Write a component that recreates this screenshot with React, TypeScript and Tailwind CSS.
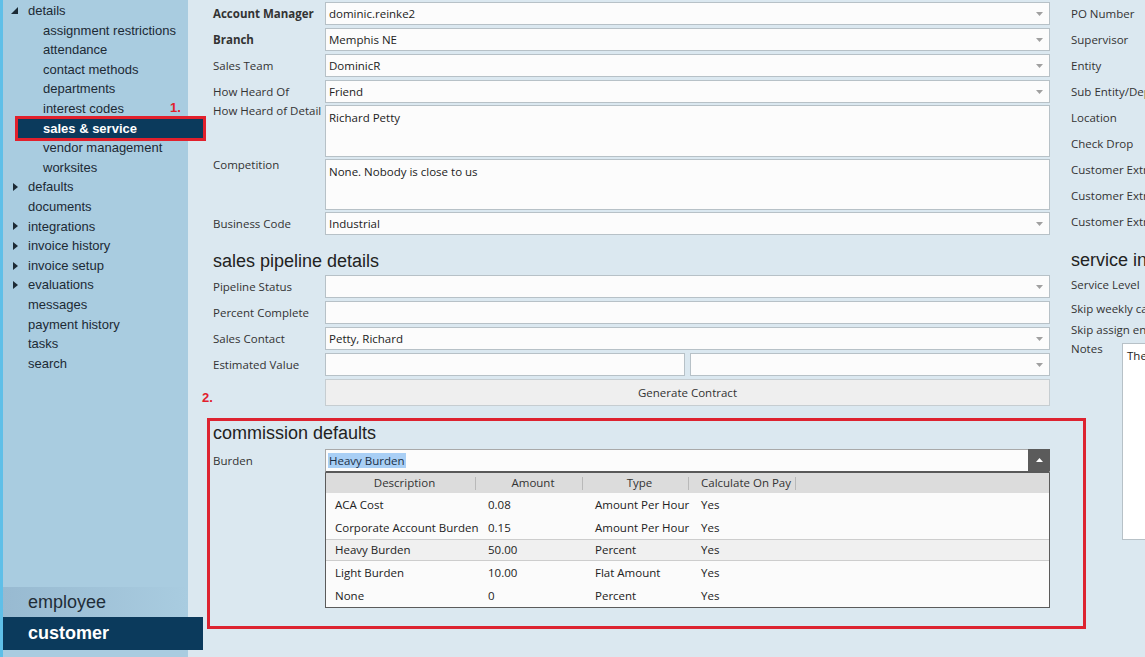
import type { ReactNode } from 'react'

type NavItem = {
  label: string
  depth: 0 | 1
  caret?: 'open' | 'closed'
  active?: boolean
  note?: string
}

const NAV: NavItem[] = [
  { label: 'details', depth: 0, caret: 'open' },
  { label: 'assignment restrictions', depth: 1 },
  { label: 'attendance', depth: 1 },
  { label: 'contact methods', depth: 1 },
  { label: 'departments', depth: 1 },
  { label: 'interest codes', depth: 1, note: '1.' },
  { label: 'sales & service', depth: 1, active: true },
  { label: 'vendor management', depth: 1 },
  { label: 'worksites', depth: 1 },
  { label: 'defaults', depth: 0, caret: 'closed' },
  { label: 'documents', depth: 0 },
  { label: 'integrations', depth: 0, caret: 'closed' },
  { label: 'invoice history', depth: 0, caret: 'closed' },
  { label: 'invoice setup', depth: 0, caret: 'closed' },
  { label: 'evaluations', depth: 0, caret: 'closed' },
  { label: 'messages', depth: 0 },
  { label: 'payment history', depth: 0 },
  { label: 'tasks', depth: 0 },
  { label: 'search', depth: 0 },
]

const BURDENS = [
  { desc: 'ACA Cost', amount: '0.08', type: 'Amount Per Hour', calc: 'Yes' },
  { desc: 'Corporate Account Burden', amount: '0.15', type: 'Amount Per Hour', calc: 'Yes' },
  { desc: 'Heavy Burden', amount: '50.00', type: 'Percent', calc: 'Yes', selected: true },
  { desc: 'Light Burden', amount: '10.00', type: 'Flat Amount', calc: 'Yes' },
  { desc: 'None', amount: '0', type: 'Percent', calc: 'Yes' },
]

const RIGHT_LABELS = [
  'PO Number',
  'Supervisor',
  'Entity',
  'Sub Entity/Department',
  'Location',
  'Check Drop',
  'Customer Extra 1',
  'Customer Extra 2',
  'Customer Extra 3',
]

export default function App() {
  return (
    <div className="flex h-[657px] w-[1145px] overflow-hidden bg-[#dbe8f0] font-['Open_Sans',sans-serif] text-[11.5px] text-[#333]">
      <Sidebar />
      <main className="flex flex-1 gap-[21px] pl-[25px] pt-[2px]">
        <div className="w-[837px] flex-none">
          <Field label="Account Manager" bold value="dominic.reinke2" select />
          <Field label="Branch" bold value="Memphis NE" select />
          <Field label="Sales Team" value="DominicR" select />
          <Field label="How Heard Of" value="Friend" select className="mb-[2px]" />
          <AreaField label="How Heard of Detail" value="Richard Petty" className="mb-[2px] h-[52px]" />
          <AreaField label="Competition" value="None. Nobody is close to us" className="mb-[2px] h-[51px]" />
          <Field label="Business Code" value="Industrial" select />

          <Heading className="pt-[12px] pb-[3px]">sales pipeline details</Heading>
          <Field label="Pipeline Status" select />
          <Field label="Percent Complete" />
          <Field label="Sales Contact" value="Petty, Richard" select />
          <div className="mb-[3px] flex h-[23px]">
            <Label>Estimated Value</Label>
            <div className="flex flex-1 gap-[5px]">
              <Box className="flex-1" />
              <Box className="flex-1" select />
            </div>
          </div>
          <div className="flex">
            <div className="relative w-[112px]">
              <span className="absolute -left-[11px] top-[9px] font-['Liberation_Sans',sans-serif] text-[13px] font-bold text-[#e2202c]">
                2.
              </span>
            </div>
            <button className="h-[27px] flex-1 border border-[#c6cdd1] bg-[#efefef] text-[#333]">
              Generate Contract
            </button>
          </div>

          <CommissionDefaults />
        </div>

        <RightColumn />
      </main>
    </div>
  )
}

function Sidebar() {
  return (
    <aside className="relative z-10 flex w-[188px] flex-none flex-col border-l-[3px] border-[#5fbfe8] bg-[#a9cce0] pt-[1px] font-['Liberation_Sans',Arial,sans-serif] text-[13px] text-[#1c2a35]">
      {NAV.map((item) => (
        <NavRow key={item.label} item={item} />
      ))}
      <div className="flex-1" />
      <div className="flex h-[30px] items-center bg-linear-to-r from-[#98bad1] to-[#a9cce0] pl-[25px] text-[18px] text-[#1f2d38]">
        employee
      </div>
      <div className="flex h-[33px] w-[200px] items-center bg-[#0b3a5c] pl-[25px] text-[18px] font-bold text-white">
        customer
      </div>
      <div className="h-[7px]" />
    </aside>
  )
}

function NavRow({ item }: { item: NavItem }) {
  if (item.active) {
    return (
      <div className="relative ml-[15px] h-[19.6px] w-[185px] bg-[#0b3a5c] pl-[25px] font-bold leading-[19.6px] text-white">
        {item.label}
        <span className="pointer-events-none absolute -inset-[3px] border-[3px] border-[#e2202c]" />
      </div>
    )
  }
  return (
    <div className="relative flex h-[19.6px] items-center leading-[19.6px]">
      <span className={`flex w-[25px] flex-none ${item.caret === 'open' ? 'pl-[8px]' : 'pl-[10px]'}`}>
        {item.caret === 'open' && (
          <svg width="7" height="7" viewBox="0 0 7 7" aria-hidden>
            <path d="M7 0 L7 7 L0 7 Z" fill="#1c2a35" />
          </svg>
        )}
        {item.caret === 'closed' && (
          <svg width="5" height="8" viewBox="0 0 5 8" aria-hidden>
            <path d="M0 0 L5 4 L0 8 Z" fill="#1c2a35" />
          </svg>
        )}
      </span>
      <span className={`whitespace-nowrap ${item.depth === 1 ? 'pl-[15px]' : ''}`}>{item.label}</span>
      {item.note && (
        <span className="absolute left-[167px] top-[-1px] font-bold text-[#e2202c]">{item.note}</span>
      )}
    </div>
  )
}

function Label({ children, bold, area }: { children: ReactNode; bold?: boolean; area?: boolean }) {
  return (
    <div
      className={`w-[112px] flex-none whitespace-nowrap ${
        area ? 'leading-[12px]' : 'pt-[3px] leading-[17px]'
      } ${bold ? 'font-bold' : ''}`}
    >
      {children}
    </div>
  )
}

function Arrow() {
  return (
    <svg width="7" height="4" viewBox="0 0 7 4" className="flex-none" aria-hidden>
      <path d="M0 0 L7 0 L3.5 4 Z" fill="#a0a0a0" />
    </svg>
  )
}

function Box({ value, select, className = '' }: { value?: string; select?: boolean; className?: string }) {
  return (
    <div
      className={`flex h-[23px] items-center border border-[#b7c1c7] bg-[#fcfcfc] pl-[3px] pr-[6px] text-[#222] ${className}`}
    >
      <span className="flex-1 truncate">{value}</span>
      {select && <Arrow />}
    </div>
  )
}

function Field({
  label,
  value,
  bold,
  select,
  className = 'mb-[3px]',
}: {
  label: string
  value?: string
  bold?: boolean
  select?: boolean
  className?: string
}) {
  return (
    <div className={`flex h-[23px] ${className}`}>
      <Label bold={bold}>{label}</Label>
      <Box value={value} select={select} className="flex-1" />
    </div>
  )
}

function AreaField({ label, value, className = '' }: { label: string; value: string; className?: string }) {
  return (
    <div className={`flex ${className}`}>
      <Label area>{label}</Label>
      <div className="flex-1 border border-[#b7c1c7] bg-[#fcfcfc] pl-[3px] pt-[3px] leading-[17px] text-[#222]">
        {value}
      </div>
    </div>
  )
}

function Heading({ children, className = '' }: { children: ReactNode; className?: string }) {
  return (
    <h2
      className={`whitespace-nowrap font-['Liberation_Sans',Arial,sans-serif] text-[18px] font-normal leading-[22px] text-[#222] ${className}`}
    >
      {children}
    </h2>
  )
}

function CommissionDefaults() {
  return (
    <section className="-ml-[6px] -mr-[36px] mt-[12px] border-[3px] border-[#dd2330] pb-[18px] pl-[3px] pr-[33px]">
      <Heading className="mb-[5px] pt-[1px]">commission defaults</Heading>
      <div className="flex">
        <div className="w-[112px] flex-none pt-[3px] leading-[17px]">Burden</div>
        <div className="flex-1">
          <div className="flex h-[24px] border-x border-t border-b-2 border-[#a9a9a9] border-b-[#595959] bg-[#fcfcfc]">
            <div className="flex flex-1 items-center pl-[2px]">
              <span className="bg-[#a9cff5] px-[1px] leading-[15px] text-[#1b2f45]">Heavy Burden</span>
            </div>
            <div className="-mr-px -mt-px flex w-[22px] items-center justify-center bg-[#5b5b5b]">
              <svg width="7" height="4" viewBox="0 0 7 4" aria-hidden>
                <path d="M0 4 L7 4 L3.5 0 Z" fill="#ffffff" />
              </svg>
            </div>
          </div>
          <div className="border-x border-b border-[#5b5b5b] bg-[#fbfbfb] text-[#222]">
            <div className="flex h-[20px] items-center bg-[#dcdcdc] text-[#333]">
              <HeadCell w="w-[150px]">Description</HeadCell>
              <HeadCell w="w-[107px]">Amount</HeadCell>
              <HeadCell w="w-[106px]">Type</HeadCell>
              <HeadCell w="w-[107px]">Calculate On Pay</HeadCell>
            </div>
            {BURDENS.map((b) => (
              <div
                key={b.desc}
                className={`flex items-center ${
                  b.selected ? 'h-[22px] border-y border-[#cdcdcd] bg-[#f0f0f0]' : 'h-[23px]'
                }`}
              >
                <span className="w-[150px] flex-none whitespace-nowrap pl-[9px]">{b.desc}</span>
                <span className="w-[107px] flex-none pl-[12px]">{b.amount}</span>
                <span className="w-[106px] flex-none whitespace-nowrap pl-[12px]">{b.type}</span>
                <span className="w-[107px] flex-none pl-[12px]">{b.calc}</span>
              </div>
            ))}
          </div>
        </div>
      </div>
    </section>
  )
}

function HeadCell({ w, children }: { w: string; children: ReactNode }) {
  return (
    <div className={`flex flex-none items-center ${w}`}>
      <span className="flex-1 whitespace-nowrap pl-[8px] text-center">{children}</span>
      <span className="h-[13px] w-px bg-[#b9b9b9]" />
    </div>
  )
}

function RightColumn() {
  return (
    <div className="w-[240px] flex-none whitespace-nowrap">
      {RIGHT_LABELS.map((l) => (
        <div key={l} className="mb-[3px] h-[23px] pt-[3px] leading-[17px]">
          {l}
        </div>
      ))}
      <Heading className="pt-[13px]">service information</Heading>
      <div className="mt-[3px] h-[22px] leading-[22px]">Service Level</div>
      <div className="mt-[2px] h-[22px] leading-[22px]">Skip weekly calls</div>
      <div className="h-[20px] leading-[20px]">Skip assign end date</div>
      <div className="mt-[3px] flex">
        <div className="w-[51px] flex-none leading-[12px]">Notes</div>
        <div className="h-[197px] flex-1 border border-[#b7c1c7] bg-white pl-[4px] pt-[3px] leading-[17px] text-[#222]">
          The
        </div>
      </div>
    </div>
  )
}
